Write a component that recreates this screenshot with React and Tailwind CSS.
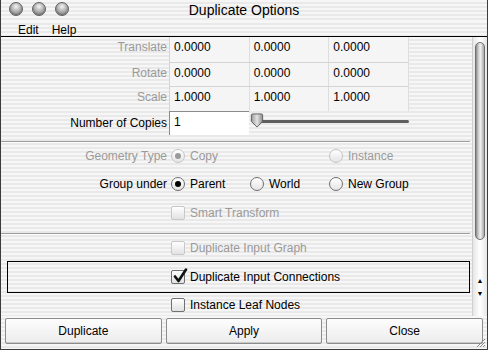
import React from "react";

const stripes =
  "bg-[repeating-linear-gradient(to_bottom,#f6f6f6_0px,#f6f6f6_2px,#e9e9e9_2px,#e9e9e9_4px)]";

function Light() {
  return (
    <span className="w-[14px] h-[14px] rounded-full border border-[#5f5f5f] bg-[radial-gradient(circle_at_50%_30%,#f4f4f4_0%,#b4b4b4_45%,#7d7d7d_100%)] shadow-[inset_0_-1px_2px_rgba(0,0,0,0.25)]" />
  );
}

function Radio({ on, disabled }) {
  return (
    <span
      className={`w-[14px] h-[14px] rounded-full border flex items-center justify-center shrink-0 bg-[linear-gradient(to_bottom,#ffffff,#e4e4e4)] ${
        disabled ? "border-[#c4c4c4]" : "border-[#6f6f6f]"
      }`}
    >
      {on && <span className={`w-[6px] h-[6px] rounded-full ${disabled ? "bg-[#9a9a9a]" : "bg-black"}`} />}
    </span>
  );
}

function Check({ on, disabled }) {
  return (
    <span
      className={`relative w-[14px] h-[14px] rounded-[2px] border shrink-0 bg-[linear-gradient(to_bottom,#ffffff,#e2e2e2)] ${
        disabled ? "border-[#c8c8c8]" : "border-[#707070]"
      }`}
    >
      {on && (
        <svg viewBox="0 0 16 16" className="absolute left-[0px] top-[-3px] w-[16px] h-[16px]">
          <path d="M3 8.5 L6.5 13 L14 1.5" fill="none" stroke="#111" strokeWidth="2.6" strokeLinecap="round" strokeLinejoin="round" />
        </svg>
      )}
    </span>
  );
}

function Label({ children, dim }) {
  return (
    <div className={`w-[168px] shrink-0 text-right pr-[2px] ${dim ? "text-[#9a9a9a]" : "text-black"}`}>
      {children}
    </div>
  );
}

// one row of the transform table; text sits a little above the middle
function VecRow({ label, vals, h, last }) {
  return (
    <div className={`flex items-stretch shrink-0 ${h}`}>
      <div className="w-[168px] shrink-0 text-right pr-[2px] pt-[1px] text-[#9a9a9a]">{label}</div>
      <div className={`grid grid-cols-3 w-[240px] bg-[#f5f5f5] border-l border-[#d4d4d4] ${last ? "" : "border-b"}`}>
        {vals.map((v, i) => (
          <div key={i} className="pl-[4px] pt-[1px] border-r border-[#dedede]">
            {v}
          </div>
        ))}
      </div>
    </div>
  );
}

function Separator() {
  return <div className="h-[2px] shrink-0 mr-[2px] border-t border-[#9c9c9c] border-b border-b-white" />;
}

export default function App() {
  return (
    <div className="relative w-[488px] h-[350px] overflow-hidden border-x border-b border-[#3c3c3c] flex flex-col text-[12px] text-black font-['Liberation_Sans',Arial,sans-serif] bg-[#efefef]">
      {/* Title bar */}
      <div className={`relative h-[21px] shrink-0 flex items-start pt-[2px] ${stripes}`}>
        <div className="flex gap-[9px] pl-[8px]">
          <Light />
          <Light />
          <Light />
        </div>
        <div className="absolute inset-0 flex items-center justify-center text-[14px] pb-[1px]">
          Duplicate Options
        </div>
      </div>

      {/* Menu bar */}
      <div className={`h-[16px] shrink-0 flex items-end gap-[13px] pl-[17px] border-b border-black leading-[12px] ${stripes}`}>
        <span>Edit</span>
        <span>Help</span>
      </div>

      {/* Scroll area */}
      <div className="flex shrink-0">
        <div className={`flex-1 flex flex-col ${stripes}`}>
          <VecRow label="Translate" vals={["0.0000", "0.0000", "0.0000"]} h="h-[26px]" />
          <VecRow label="Rotate" vals={["0.0000", "0.0000", "0.0000"]} h="h-[24px]" />
          <VecRow label="Scale" vals={["1.0000", "1.0000", "1.0000"]} h="h-[24px]" last />

          <div className="flex items-center h-[24px] shrink-0">
            <Label>Number of Copies</Label>
            <div className="w-[80px] h-[24px] bg-white border-t border-l border-[#8a8a8a] flex items-center pl-[4px] pb-[3px]">
              1
            </div>
            <div className="relative w-[160px] h-[24px] flex items-center pb-[3px]">
              <div className="ml-[4px] h-[3px] w-[156px] rounded-full bg-[#5f5f5f]" />
              <svg viewBox="0 0 14 16" className="absolute left-[1px] top-[2px] w-[14px] h-[15px]">
                <defs>
                  <linearGradient id="th" x1="0" y1="0" x2="1" y2="0">
                    <stop offset="0" stopColor="#9a9a9a" />
                    <stop offset="0.5" stopColor="#e2e2e2" />
                    <stop offset="1" stopColor="#8d8d8d" />
                  </linearGradient>
                </defs>
                <path d="M2.5 1 H11.5 Q13 1 13 2.5 V9 L7 15 L1 9 V2.5 Q1 1 2.5 1 Z" fill="url(#th)" stroke="#5a5a5a" strokeWidth="1" />
              </svg>
            </div>
          </div>

          <div className="h-[6px] shrink-0" />
          <Separator />

          <div className="flex items-center h-[26px] shrink-0">
            <Label dim>Geometry Type</Label>
            <div className="flex items-center gap-[5px] w-[160px] pl-[2px] text-[#9a9a9a]">
              <Radio on disabled />
              <span>Copy</span>
            </div>
            <div className="flex items-center gap-[5px] text-[#9a9a9a]">
              <Radio disabled />
              <span>Instance</span>
            </div>
          </div>

          <div className="flex items-center h-[28px] mt-[1px] shrink-0">
            <Label>Group under</Label>
            <div className="flex items-center gap-[5px] w-[81px] pl-[2px]">
              <Radio on />
              <span>Parent</span>
            </div>
            <div className="flex items-center gap-[5px] w-[79px]">
              <Radio />
              <span>World</span>
            </div>
            <div className="flex items-center gap-[5px]">
              <Radio />
              <span>New Group</span>
            </div>
          </div>

          <div className="flex items-center h-[28px] mt-[1px] shrink-0">
            <Label />
            <div className="flex items-center gap-[5px] pl-[2px] text-[#9a9a9a]">
              <Check disabled />
              <span>Smart Transform</span>
            </div>
          </div>

          <div className="h-[6px] shrink-0" />
          <Separator />

          <div className="flex items-center h-[26px] shrink-0">
            <Label />
            <div className="flex items-center gap-[5px] pl-[2px] text-[#9a9a9a]">
              <Check disabled />
              <span>Duplicate Input Graph</span>
            </div>
          </div>

          <div className="ml-[6px] mr-[2px] h-[32px] shrink-0 border border-black flex items-center">
            <div className="w-[163px] shrink-0" />
            <div className="flex items-center gap-[5px]">
              <Check on />
              <span>Duplicate Input Connections</span>
            </div>
          </div>

          <div className="flex items-center h-[22px] mt-[1px] shrink-0">
            <Label />
            <div className="flex items-center gap-[5px] pl-[2px]">
              <Check />
              <span>Instance Leaf Nodes</span>
            </div>
          </div>
        </div>

        {/* Scrollbar */}
        <div className="w-[15px] flex flex-col bg-[linear-gradient(to_right,#e6e6e6,#ffffff,#e6e6e6)] border-l border-[#cfcfcf]">
          <div className="mt-[5px] mx-[2px] h-[198px] rounded-full border border-[#6e6e6e] bg-[linear-gradient(to_right,#8a8a8a,#d6d6d6_35%,#f0f0f0_55%,#a9a9a9)]" />
          <div className="flex-1" />
          <div className="h-[13px] flex items-center justify-center text-[7px] leading-none">▲</div>
          <div className="h-[13px] flex items-center justify-center text-[7px] leading-none mb-[16px]">▼</div>
        </div>
      </div>

      {/* Buttons */}
      <div className={`flex-1 flex gap-[4px] px-[4px] pt-[2px] pb-[5px] ${stripes}`}>
        {["Duplicate", "Apply", "Close"].map((b) => (
          <div
            key={b}
            className="flex-1 flex items-center justify-center border border-[#8c8c8c] rounded-[2px] bg-[linear-gradient(to_bottom,#fdfdfd,#ececec)] shadow-[inset_0_-1px_0_#c8c8c8]"
          >
            {b}
          </div>
        ))}
      </div>

      {/* resize grip */}
      <svg viewBox="0 0 12 12" className="absolute right-[1px] bottom-[1px] w-[12px] h-[12px]">
        <path d="M11 3 L3 11 M11 6 L6 11 M11 9 L9 11" stroke="#8a8a8a" strokeWidth="1" />
      </svg>
    </div>
  );
}
